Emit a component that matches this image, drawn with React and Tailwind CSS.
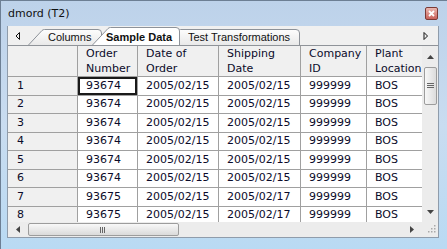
import React from 'react';

const rows = [
  ['1', '93674', '2005/02/15', '2005/02/15', '999999', 'BOS'],
  ['2', '93674', '2005/02/15', '2005/02/15', '999999', 'BOS'],
  ['3', '93674', '2005/02/15', '2005/02/15', '999999', 'BOS'],
  ['4', '93674', '2005/02/15', '2005/02/15', '999999', 'BOS'],
  ['5', '93674', '2005/02/15', '2005/02/15', '999999', 'BOS'],
  ['6', '93674', '2005/02/15', '2005/02/15', '999999', 'BOS'],
  ['7', '93675', '2005/02/15', '2005/02/17', '999999', 'BOS'],
  ['8', '93675', '2005/02/15', '2005/02/17', '999999', 'BOS'],
];

const cols = [
  { w: 'w-[70px] bg-[#f0f0f0]', label: ['', ''] },
  { w: 'w-[60px]', label: ['Order', 'Number'] },
  { w: 'w-[81px]', label: ['Date of', 'Order'] },
  { w: 'w-[82px]', label: ['Shipping', 'Date'] },
  { w: 'w-[66px]', label: ['Company', 'ID'] },
  { w: 'w-[80px]', label: ['Plant', 'Location'] },
];

const tabFont = { fontFamily: '"Liberation Sans", Arial, sans-serif' };

function Tab({ className, w, h, label, bold, selected, pl }) {
  const d = `M0.5 ${h} L${h - 2} 1.5 Q${h - 1} 0.5 ${h + 0.5} 0.5 L${w - 4} 0.5 Q${w - 0.5} 0.5 ${w - 0.5} 4 L${w - 0.5} ${h}`;
  return (
    <div className={`relative shrink-0 ${className}`} style={{ width: w, height: h }}>
      <svg className="absolute inset-0" width={w} height={h}>
        <defs>
          <linearGradient id="tabg" x1="0" y1="0" x2="0" y2="1">
            <stop offset="0" stopColor="#fdfdfd" />
            <stop offset="1" stopColor="#e9e9e9" />
          </linearGradient>
        </defs>
        <path d={d} fill={selected ? '#ffffff' : 'url(#tabg)'} stroke="#8d9299" strokeWidth="1" />
      </svg>
      <div
        className={`relative text-[11px] leading-[14px] text-[#111] whitespace-nowrap ${bold ? 'font-bold pt-[3px]' : 'pt-[1px]'}`}
        style={{ ...tabFont, paddingLeft: pl }}
      >
        {label}
      </div>
    </div>
  );
}

export default function App() {
  return (
    <div
      className="w-[447px] h-[249px] overflow-hidden flex flex-col bg-gradient-to-b from-[#bdd2ea] via-[#c9dcf0] to-[#b9daf3] border-t border-l border-[#6d7f94]"
      style={{ fontFamily: '"DejaVu Sans", Verdana, sans-serif' }}
    >
      {/* title bar */}
      <div className="h-[25px] shrink-0 flex items-center pl-[7px] pr-[9px]">
        <span className="text-[11px] text-[#111] pt-[2px]">dmord (T2)</span>
        <div className="ml-auto w-[13px] h-[13px] rounded-[2px] border border-[#7a3a36] bg-gradient-to-b from-[#e9b7b1] to-[#c8605a] flex items-center justify-center">
          <svg width="7" height="7" viewBox="0 0 7 7">
            <path d="M1 1 L6 6 M6 1 L1 6" stroke="#fff" strokeWidth="1.8" />
          </svg>
        </div>
      </div>

      {/* panel */}
      <div className="ml-[6px] w-[432px] h-[212px] shrink-0 bg-[#f0f0f0] border-l border-r border-b border-[#8f9cab] flex flex-col">
        {/* tab strip */}
        <div className="h-[19px] shrink-0 flex items-end">
          <div className="w-[20px] self-start pt-[6px] pl-[7px]">
            <svg width="6" height="8" viewBox="0 0 6 8">
              <path d="M4.5 0.5 L1 4 L4.5 7.5 Z" fill="none" stroke="#111" strokeWidth="1" />
            </svg>
          </div>
          <Tab className="z-0" w={74} h={16} label="Columns" pl={20} />
          <Tab className="z-20 -ml-[10px]" w={88} h={18} label="Sample Data" bold selected pl={14} />
          <Tab className="z-10 -ml-[16px]" w={136} h={16} label="Test Transformations" pl={24} />
          <div className="flex-1" />
          <div className="w-[16px] self-start pt-[6px] pl-[1px]">
            <svg width="6" height="8" viewBox="0 0 6 8">
              <path d="M1 0.5 L4.5 4 L1 7.5 Z" fill="none" stroke="#111" strokeWidth="1" />
            </svg>
          </div>
        </div>

        {/* grid + vertical scrollbar */}
        <div className="h-[177px] shrink-0 flex border-t border-[#8f9399]">
          <div className="w-[415px] overflow-hidden bg-white text-[11px] text-[#0b0b2a]">
            <div className="flex h-[31px] bg-[#f0f0f0]">
              {cols.map((c, i) => (
                <div key={i} className={`${c.w} shrink-0 border-r border-b border-[#a0a0a0] flex flex-col justify-center pl-2 leading-[15px] whitespace-nowrap`}>
                  <span>{c.label[0]}</span>
                  <span>{c.label[1]}</span>
                </div>
              ))}
            </div>
            {rows.map((r, ri) => (
              <div key={ri} className="flex h-[18.5px]">
                {r.map((v, ci) => (
                  <div
                    key={ci}
                    className={`${cols[ci].w} shrink-0 border-r border-b border-[#a0a0a0] flex items-center ${ci === 0 ? 'pl-[9px]' : 'pl-2'} whitespace-nowrap ${ri === 0 && ci === 1 ? 'shadow-[inset_0_0_0_2px_#1a1a1a]' : ''}`}
                  >
                    {v}
                  </div>
                ))}
              </div>
            ))}
          </div>
          {/* vertical scrollbar */}
          <div className="w-[16px] shrink-0 bg-[#ececec] flex flex-col items-center">
            <div className="h-[19px] flex items-center justify-center pt-[2px]">
              <svg width="7" height="4" viewBox="0 0 7 4"><path d="M0 4 L3.5 0 L7 4 Z" fill="#444" /></svg>
            </div>
            <div className="mt-[2px] w-[13px] h-[38px] rounded-[2px] border border-[#9c9c9c] bg-gradient-to-r from-[#f7f7f7] to-[#dcdcdc] flex items-center justify-center">
              <svg width="7" height="6" viewBox="0 0 7 6"><path d="M0 0.5 H7 M0 2.5 H7 M0 4.5 H7" stroke="#666" strokeWidth="1" /></svg>
            </div>
            <div className="flex-1" />
            <div className="h-[17px] flex items-center justify-center pb-[4px]">
              <svg width="7" height="4" viewBox="0 0 7 4"><path d="M0 0 L3.5 4 L7 0 Z" fill="#444" /></svg>
            </div>
          </div>
        </div>

        {/* horizontal scrollbar */}
        <div className="flex-1 flex bg-[#ececec]">
          <div className="w-[415px] flex items-center">
            <div className="w-[18px] flex justify-center pl-[2px]">
              <svg width="4" height="7" viewBox="0 0 4 7"><path d="M4 0 L0 3.5 L4 7 Z" fill="#444" /></svg>
            </div>
            <div className="ml-[2px] w-[151px] h-[13px] rounded-[2px] border border-[#9c9c9c] bg-gradient-to-b from-[#f8f8f8] to-[#dadada] flex items-center justify-center">
              <svg width="7" height="6" viewBox="0 0 7 6"><path d="M0.5 0 V6 M2.5 0 V6 M4.5 0 V6" stroke="#666" strokeWidth="1" /></svg>
            </div>
            <div className="flex-1" />
            <div className="w-[16px] flex justify-center pr-[6px]">
              <svg width="4" height="7" viewBox="0 0 4 7"><path d="M0 0 L4 3.5 L0 7 Z" fill="#444" /></svg>
            </div>
          </div>
          <div className="w-[15px] flex items-end justify-end p-[2px]">
            <svg width="10" height="10" viewBox="0 0 10 10">
              <g fill="#a9a9a9">
                <rect x="8" y="0" width="1.5" height="1.5" />
                <rect x="5" y="3" width="1.5" height="1.5" />
                <rect x="8" y="3" width="1.5" height="1.5" />
                <rect x="2" y="6" width="1.5" height="1.5" />
                <rect x="5" y="6" width="1.5" height="1.5" />
                <rect x="8" y="6" width="1.5" height="1.5" />
              </g>
            </svg>
          </div>
        </div>
      </div>
    </div>
  );
}
